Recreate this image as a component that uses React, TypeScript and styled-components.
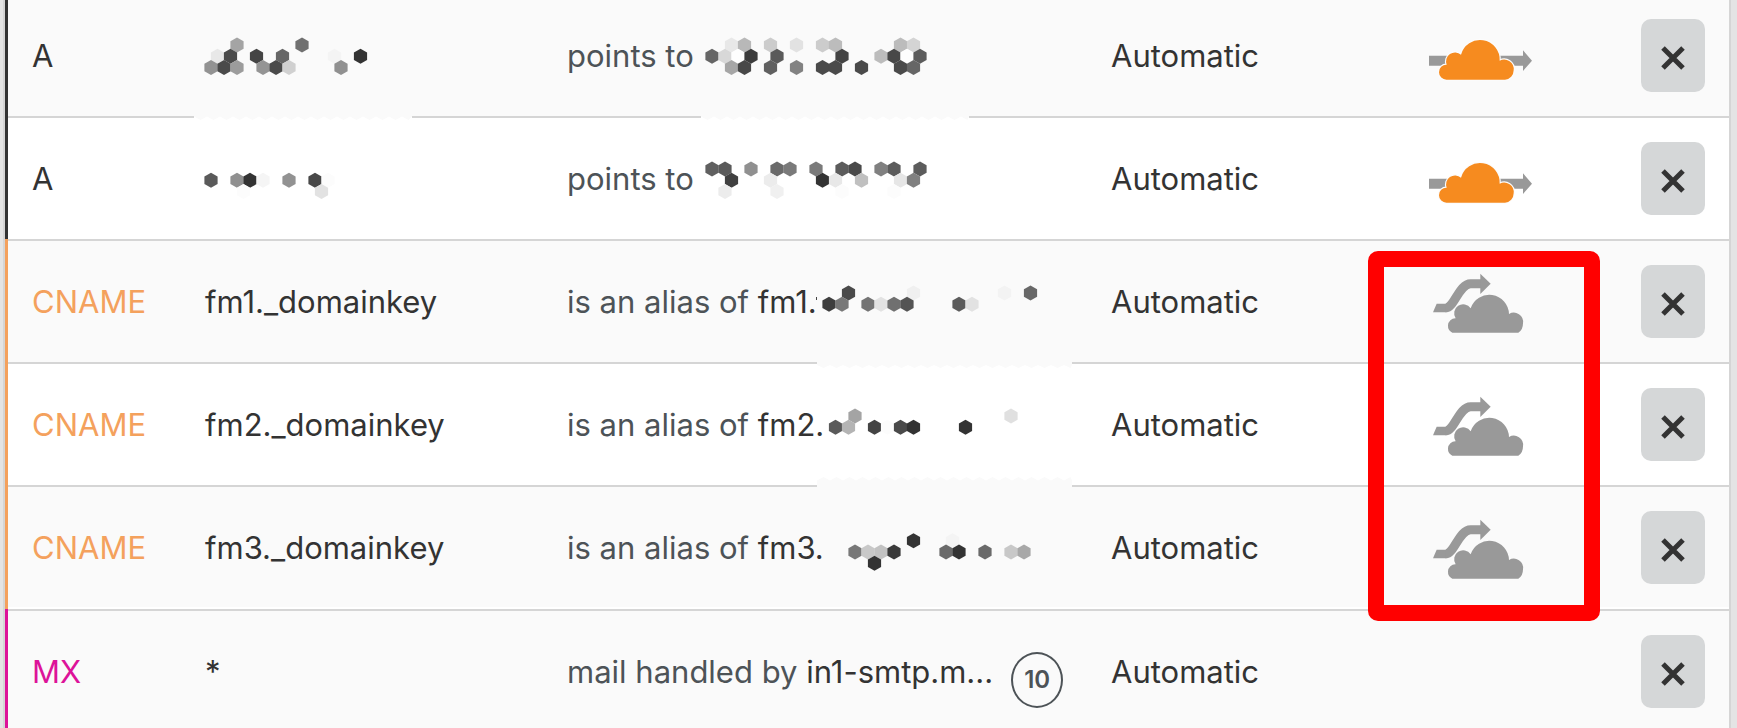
import React from "react";
import styled, { createGlobalStyle } from "styled-components";

const GlobalStyle = createGlobalStyle`
  *, *::before { box-sizing: border-box; }
  body {
    margin: 0;
    background: #e4e4e4;
    font-family: Inter, "Liberation Sans", sans-serif;
    font-size: 31px;
    line-height: 40px;
    color: #333333;
  }
`;

const Viewport = styled.main`
  height: 100vh;
  overflow: hidden;
  padding: 0 6px 0 3px;
`;

const Panel = styled.div`
  margin-top: -7px;
  border: solid #d5d5d5;
  border-width: 0 2px;
`;

const Table = styled.table`
  width: 100%;
  table-layout: fixed;
  border-collapse: separate;
  border-spacing: 0;
`;

const Col = styled.col<{ $width?: string }>`
  width: ${(p) => p.$width ?? "auto"};
`;

const Row = styled.tr<{ $bg: string; $divided?: boolean }>`
  height: ${(p) => (p.$divided ? 124 : 123)}px;
  background: ${(p) => p.$bg};

  & > td {
    border-bottom: ${(p) => (p.$divided ? "2px solid #ffffff" : "0")};
  }
`;

const Cell = styled.td`
  position: relative;
  height: inherit;
  padding: 21px 0 0 20px;
  border-top: 2px solid #d5d5d5;
  vertical-align: top;
  white-space: nowrap;
  line-height: 80px;
`;

const TypeCell = styled(Cell)<{ $color: string }>`
  padding-left: 27px;
  color: ${(p) => p.$color};

  &::before {
    content: "";
    position: absolute;
    top: -2px;
    bottom: -2px;
    left: 0;
    width: 3px;
    background: ${(p) => p.$color};
  }
`;

const StatusCell = styled(Cell)`
  padding: 32px 8px 0 0;
  text-align: center;
`;

const ActionCell = styled(Cell)`
  padding-top: 24px;
`;

const Verb = styled.span`
  color: #4d5357;
`;

const ValueLine = styled.div`
  display: flex;
  align-items: flex-start;
  gap: 18px;
`;

const Priority = styled.span`
  display: flex;
  align-items: center;
  justify-content: center;
  width: 52px;
  height: 56px;
  margin-top: 20px;
  border: 2px solid #4d5357;
  border-radius: 50%;
  color: #4d5357;
  font-size: 24px;
  font-weight: 600;
  line-height: 32px;
`;

const ProxyButton = styled.button`
  display: inline-flex;
  padding: 0;
  border: 0;
  background: none;
  vertical-align: top;
  cursor: pointer;
`;

const DeleteButton = styled.button`
  display: flex;
  align-items: center;
  justify-content: center;
  width: 64px;
  height: 73px;
  padding: 5px 0 0;
  border: 0;
  border-radius: 10px;
  background: #d5d7d8;
  color: #333333;
  cursor: pointer;
`;

const Highlight = styled.div`
  position: absolute;
  z-index: 2;
  top: 10px;
  left: 20px;
  width: 232px;
  height: 370px;
  border: 16px solid #ff0000;
  border-radius: 10px;
  pointer-events: none;
`;

const MosaicSvg = styled.svg`
  position: absolute;
  z-index: 1;
  top: -2px;
  left: 0;
  width: 100%;
  height: 132px;
  overflow: visible;
  pointer-events: none;
`;

/* One hexagon: half-steps across, steps down, grey level. */
type Hex = [number, number, string];

interface Patch {
  from: number;
  to: number;
  edge: "below" | "belowDeep" | "above";
}

interface MosaicData {
  x: number;
  y: number;
  hexes: Hex[];
  patch?: Patch;
  tick?: boolean;
}

const STEP_X = 6.5;
const STEP_Y = 11.26;

const hexPoints = (cx: number, cy: number) =>
  [
    [0, -7.5],
    [6.6, -3.75],
    [6.6, 3.75],
    [0, 7.5],
    [-6.6, 3.75],
    [-6.6, -3.75],
  ]
    .map(([dx, dy]) => `${cx + dx},${cy + dy}`)
    .join(" ");

function PatchShape({ patch }: { patch: Patch }) {
  const { from, to, edge } = patch;
  const [base, low, high] =
    edge === "below" ? [120, 123.5, 127] : edge === "belowDeep" ? [120, 126, 129] : [126, 118.5, 115];
  const pts: string[] = [`${from},${base}`];
  let tooth = false;
  for (let x = from; x < to; x += STEP_X) {
    pts.push(`${x},${tooth ? high : low}`);
    tooth = !tooth;
  }
  pts.push(`${to},${low}`, `${to},${base}`);
  return (
    <>
      <rect x={from} y={121} width={to - from} height={4} fill="#ffffff" />
      <polygon points={pts.join(" ")} fill="#fafafa" />
    </>
  );
}

function Mosaic({ data }: { data: MosaicData }) {
  return (
    <MosaicSvg role="img" aria-label="Hidden value">
      {data.patch && <PatchShape patch={data.patch} />}
      {data.tick && <rect x={269} y={58} width={1} height={3} fill="#444444" />}
      {data.hexes.map(([i, k, level]) => (
        <polygon
          key={`${i}:${k}`}
          points={hexPoints(data.x + i * STEP_X, data.y + k * STEP_Y)}
          fill={`#${level}${level}${level}`}
        />
      ))}
    </MosaicSvg>
  );
}

const CLOUD =
  "M53 114 A22.5 22.5 0 0 1 30 91.500 A22 22 0 0 1 53 69 A27 27 0 0 1 96 39 A59 59 0 0 1 212 57 A29 29 0 0 1 254 86 A28 28 0 0 1 228 114 Z";

function ProxyIcon({ proxied }: { proxied: boolean }) {
  return (
    <svg width="103" height="60" viewBox="0 0 309 180" aria-hidden="true">
      {proxied ? (
        <g transform="translate(0 44)">
          <path d="M0 42H282V26L309 57L282 88V72H0Z" fill="#999999" />
          <path d={CLOUD} fill="#f68b1f" stroke="#fcfcfc" strokeWidth="7" paintOrder="stroke" />
        </g>
      ) : (
        <g transform="translate(12 2)" fill="#999999">
          <path d="M0 116L11 90H39V116Z" />
          <path d="M38 103C64 103 78 30 113 30H144" fill="none" stroke="#999999" strokeWidth="27" />
          <path d="M142 0L173 30L142 61Z" />
          <path
            transform="translate(15 63)"
            d="M43 114 A22.500 22.500 0 0 1 30 92 A22 22 0 0 1 53 71 A27 27 0 0 1 98 41 A59 59 0 0 1 213 58 A28 28 0 0 1 255 86 Q255 106 241 114 Z"
          />
        </g>
      )}
    </svg>
  );
}

function CrossIcon() {
  return (
    <svg width="24" height="24" viewBox="0 0 24 24" fill="none" stroke="currentColor" strokeWidth="5" aria-hidden="true">
      <path d="M2 2L22 22M22 2L2 22" />
    </svg>
  );
}

interface DnsRecord {
  type: string;
  color: string;
  bg: string;
  name?: string;
  nameMosaic?: MosaicData;
  verb: string;
  value?: string;
  valueMosaic?: MosaicData;
  priority?: number;
  proxied?: boolean;
  highlighted?: boolean;
  divided?: boolean;
}

const records: DnsRecord[] = [
  {
    type: "A",
    color: "#333333",
    bg: "#fafafa",
    nameMosaic: {
      x: 26,
      y: 74.6,
      patch: { from: 9, to: 227, edge: "below" },
      hexes: [
        [4, -2, "a4"], [14, -2, "70"],
        [1, -1, "e8"], [3, -1, "4a"], [7, -1, "44"], [11, -1, "66"], [19, -1, "f4"], [23, -1, "33"],
        [0, 0, "92"], [2, 0, "4a"], [4, 0, "9c"], [8, 0, "94"], [10, 0, "4a"], [12, 0, "d0"], [20, 0, "90"],
      ],
    },
    verb: "points to",
    valueMosaic: {
      x: 165,
      y: 74.6,
      patch: { from: 154, to: 422, edge: "below" },
      hexes: [
        [3, -2, "e8"], [5, -2, "b8"], [9, -2, "cc"], [13, -2, "e2"], [17, -2, "cc"], [19, -2, "bc"], [29, -2, "bc"], [31, -2, "d4"],
        [0, -1, "66"], [2, -1, "d8"], [4, -1, "fe"], [6, -1, "3c"], [10, -1, "5a"], [20, -1, "44"], [26, -1, "bc"], [28, -1, "48"], [30, -1, "fe"], [32, -1, "5c"],
        [3, 0, "a6"], [5, 0, "48"], [9, 0, "60"], [13, 0, "82"], [17, 0, "4a"], [19, 0, "4a"], [23, 0, "4a"], [29, 0, "4a"], [31, 0, "66"],
      ],
    },
    proxied: true,
  },
  {
    type: "A",
    color: "#333333",
    bg: "#ffffff",
    nameMosaic: {
      x: 26,
      y: 64.3,
      hexes: [
        [0, 0, "5a"], [4, 0, "90"], [6, 0, "33"], [8, 0, "f5"], [12, 0, "92"], [16, 0, "48"], [18, 0, "fc"],
        [5, 1, "fc"], [17, 1, "e2"],
      ],
    },
    verb: "points to",
    valueMosaic: {
      x: 165,
      y: 64.3,
      hexes: [
        [0, -1, "60"], [2, -1, "5a"], [6, -1, "90"], [10, -1, "6a"], [12, -1, "7a"], [16, -1, "7a"], [20, -1, "5c"], [22, -1, "4a"], [26, -1, "80"], [28, -1, "5c"], [32, -1, "5c"],
        [3, 0, "40"], [9, 0, "ec"], [17, 0, "33"], [19, 0, "e8"], [23, 0, "c0"], [29, 0, "e6"], [31, 0, "80"],
        [2, 1, "ec"], [10, 1, "f0"], [20, 1, "fc"], [28, 1, "fc"],
      ],
    },
    proxied: true,
  },
  {
    type: "CNAME",
    color: "#f4a15d",
    bg: "#fafafa",
    name: "fm1._domainkey",
    verb: "is an alias of",
    value: "fm1.",
    valueMosaic: {
      x: 282,
      y: 65.3,
      tick: true,
      patch: { from: 270, to: 525, edge: "belowDeep" },
      hexes: [
        [3, -1, "4a"], [13, -1, "f0"], [27, -1, "f3"], [31, -1, "68"],
        [0, 0, "3e"], [2, 0, "78"], [6, 0, "74"], [8, 0, "e2"], [10, 0, "70"], [12, 0, "54"], [20, 0, "5c"], [22, 0, "e2"],
      ],
    },
    proxied: false,
    highlighted: true,
  },
  {
    type: "CNAME",
    color: "#f4a15d",
    bg: "#ffffff",
    name: "fm2._domainkey",
    verb: "is an alias of",
    value: "fm2.",
    valueMosaic: {
      x: 282,
      y: 65.3,
      patch: { from: 270, to: 525, edge: "above" },
      hexes: [
        [4, -1, "a4"], [28, -1, "e0"],
        [1, 0, "5a"], [3, 0, "b4"], [7, 0, "44"], [9, 0, "fc"], [11, 0, "4a"], [13, 0, "33"], [21, 0, "33"],
      ],
    },
    proxied: false,
  },
  {
    type: "CNAME",
    color: "#f4a15d",
    bg: "#fafafa",
    name: "fm3._domainkey",
    verb: "is an alias of",
    value: "fm3.",
    valueMosaic: {
      x: 282,
      y: 67,
      hexes: [
        [13, -1, "33"], [19, -1, "f4"],
        [4, 0, "78"], [6, 0, "c8"], [8, 0, "c2"], [10, 0, "3a"], [18, 0, "6a"], [20, 0, "33"], [24, 0, "6a"], [28, 0, "c8"], [30, 0, "a8"],
        [7, 1, "33"],
      ],
    },
    proxied: false,
    divided: true,
  },
  {
    type: "MX",
    color: "#dd1399",
    bg: "#fafafa",
    name: "*",
    verb: "mail handled by",
    value: "in1-smtp.m...",
    priority: 10,
  },
];

function RecordRow({ record }: { record: DnsRecord }) {
  return (
    <Row $bg={record.bg} $divided={record.divided}>
      <TypeCell $color={record.color}>{record.type}</TypeCell>
      <Cell>
        {record.name}
        {record.nameMosaic && <Mosaic data={record.nameMosaic} />}
      </Cell>
      <Cell>
        <ValueLine>
          <span>
            <Verb>{record.verb}</Verb> {record.value}
          </span>
          {record.priority !== undefined && <Priority>{record.priority}</Priority>}
        </ValueLine>
        {record.valueMosaic && <Mosaic data={record.valueMosaic} />}
      </Cell>
      <Cell>Automatic</Cell>
      <StatusCell>
        {record.proxied !== undefined && (
          <ProxyButton type="button" aria-pressed={record.proxied} aria-label="Proxy status">
            <ProxyIcon proxied={record.proxied} />
          </ProxyButton>
        )}
        {record.highlighted && <Highlight />}
      </StatusCell>
      <ActionCell>
        <DeleteButton type="button" aria-label="Delete record">
          <CrossIcon />
        </DeleteButton>
      </ActionCell>
    </Row>
  );
}

export default function App() {
  return (
    <>
      <GlobalStyle />
      <Viewport>
        <Panel>
          <Table aria-label="DNS records">
            <colgroup>
              <Col $width="180px" />
              <Col $width="21%" />
              <Col />
              <Col $width="257px" />
              <Col $width="273px" />
              <Col $width="108px" />
            </colgroup>
            <tbody>
              {records.map((record, index) => (
                <RecordRow key={index} record={record} />
              ))}
            </tbody>
          </Table>
        </Panel>
      </Viewport>
    </>
  );
}
